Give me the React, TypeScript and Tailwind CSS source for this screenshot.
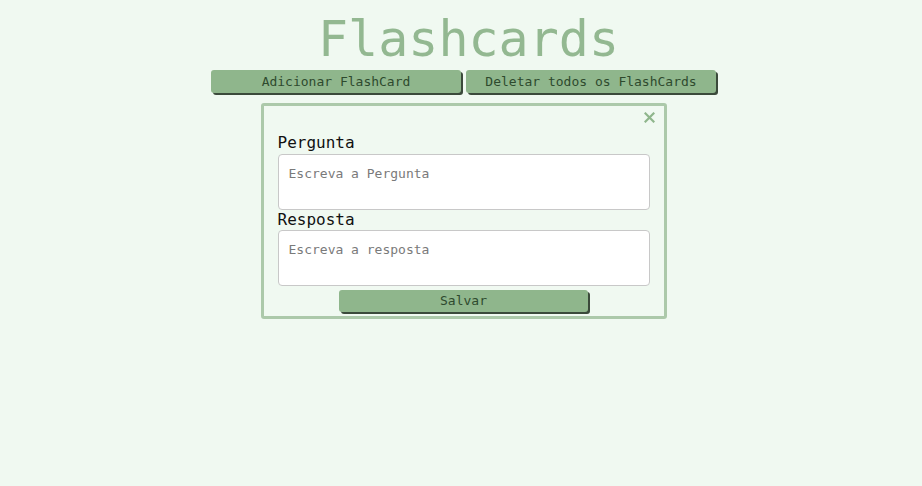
import React from "react";

const mono = { fontFamily: '"DejaVu Sans Mono", "Liberation Mono", monospace' };

const CloseIcon = () => (
  <svg width="11" height="11" viewBox="0 0 11 11" fill="none" stroke="#8fb68c" strokeWidth="2.2" strokeLinecap="square">
    <path d="M1.5 1.5L9.5 9.5M9.5 1.5L1.5 9.5" />
  </svg>
);

export default function App() {
  return (
    <div className="min-h-[486px] w-full bg-[#f0f9f1] flex flex-col items-center" style={mono}>
      <h1 className="text-[50px] leading-[48px] mt-[15px] ml-[15px] text-[#93b891]">Flashcards</h1>
      <div className="flex gap-[5px] mt-[7px] ml-[5px]">
        <button className="w-[250px] h-[23px] bg-[#8fb68c] text-[#2e4a2e] text-[13px] rounded-[3px] shadow-[2px_2px_0_#3b4a3b]">
          Adicionar FlashCard
        </button>
        <button className="w-[250px] h-[23px] bg-[#8fb68c] text-[#2e4a2e] text-[13px] rounded-[3px] shadow-[2px_2px_0_#3b4a3b]">
          Deletar todos os FlashCards
        </button>
      </div>
      <div className="mt-[10px] ml-[5px] w-[406px] border-[3px] border-[#acc9aa] rounded-[3px] px-[14px] pb-[4px] flex flex-col">
        <div className="flex justify-end h-[26px] pt-[6px]">
          <span className="mr-[-5px]">
            <CloseIcon />
          </span>
        </div>
        <label className="text-[16px] leading-[22px] text-[#111]">Pergunta</label>
        <textarea
          className="h-[56px] w-full resize-none bg-white border border-[#c8c8c8] rounded-[4px] px-[10px] py-[9px] text-[13px] placeholder:text-[#7a7a7a]"
          placeholder="Escreva a Pergunta"
          style={mono}
        />
        <label className="text-[16px] leading-[20px] text-[#111]">Resposta</label>
        <textarea
          className="h-[56px] w-full resize-none bg-white border border-[#c8c8c8] rounded-[4px] px-[10px] py-[9px] text-[13px] placeholder:text-[#7a7a7a]"
          placeholder="Escreva a resposta"
          style={mono}
        />
        <div className="flex justify-center mt-[4px]">
          <button className="w-[249px] h-[22px] bg-[#8fb68c] text-[#2e4a2e] text-[13px] rounded-[3px] shadow-[2px_2px_0_#3b4a3b]">
            Salvar
          </button>
        </div>
      </div>
    </div>
  );
}
